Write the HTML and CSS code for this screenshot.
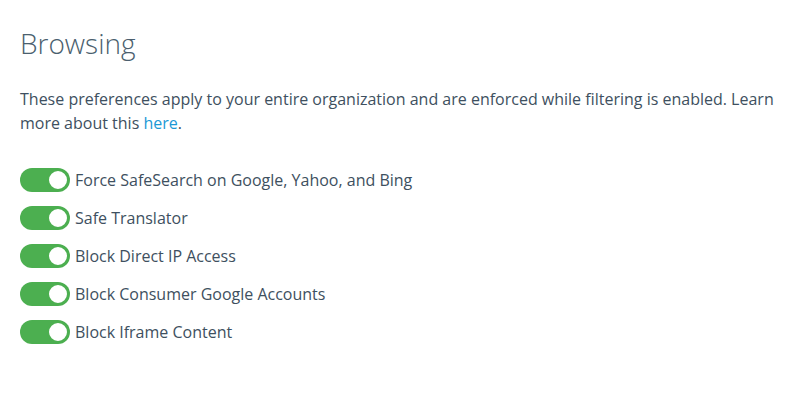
FILE: index.html
```html
<!DOCTYPE html>
<html lang="en">
<head>
  <meta charset="UTF-8">
  <title>Browsing</title>
  <link rel="stylesheet" href="styles.css">
</head>
<body>

<section class="prefs">
  <h1>Browsing</h1>
  <p class="intro">These preferences apply to your entire organization and are enforced while filtering is enabled. Learn more about this <a href="#">here</a>.</p>

  <ul class="toggles">
    <li><label><input type="checkbox" checked><span class="switch"></span>Force SafeSearch on Google, Yahoo, and Bing</label></li>
    <li><label><input type="checkbox" checked><span class="switch"></span>Safe Translator</label></li>
    <li><label><input type="checkbox" checked><span class="switch"></span>Block Direct IP Access</label></li>
    <li><label><input type="checkbox" checked><span class="switch"></span>Block Consumer Google Accounts</label></li>
    <li><label><input type="checkbox" checked><span class="switch"></span>Block Iframe Content</label></li>
  </ul>
</section>

</body>
</html>
```

FILE: styles.css
```css
body {
  margin: 0;
  font-family: "Open Sans", sans-serif;
  color: #3e5060;
  background: #fff;
}
.prefs { padding: 24px 20px; }
h1 {
  margin: 0 0 25px;
  font-size: 28px;
  font-weight: 300;
  color: #4b5f6e;
  line-height: 38px;
}
.intro {
  margin: 0 0 33px;
  font-size: 16px;
  line-height: 24px;
}
.intro a { color: #1b98d5; text-decoration: none; }
.toggles { list-style: none; margin: 0; padding: 0; }
.toggles li { height: 38px; }
.toggles label {
  display: flex;
  align-items: center;
  gap: 5px;
  font-size: 16px;
  cursor: pointer;
}
.toggles input { display: none; }
.switch {
  position: relative;
  width: 50px;
  height: 24px;
  border-radius: 12px;
  background: #4caf50;
  flex: none;
}
.switch::after {
  content: "";
  position: absolute;
  top: 1px;
  right: 1px;
  width: 18px;
  height: 18px;
  border: 2px solid #4caf50;
  border-radius: 50%;
  background: #fff;
}
```
